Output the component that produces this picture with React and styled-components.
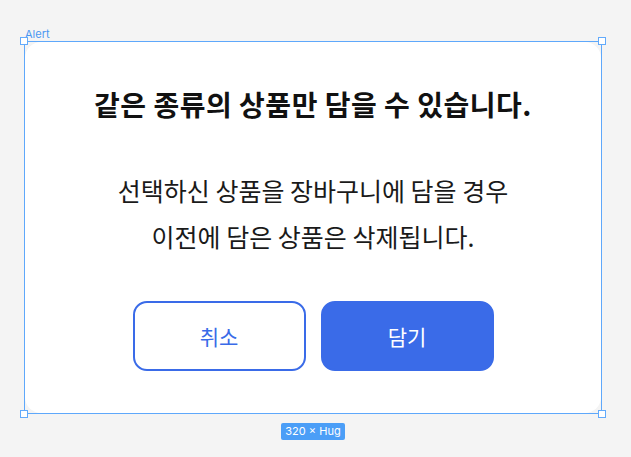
import React from "react";
import styled, { createGlobalStyle } from "styled-components";

const Global = createGlobalStyle`
  html, body { margin: 0; padding: 0; background: #f4f4f4; }
  body { font-family: Inter, "Noto Sans CJK KR", sans-serif; }
`;

const Canvas = styled.div`
  width: 631px;
  height: 457px;
  background: #f4f4f4;
  padding: 27px 0 0 24px;
  box-sizing: border-box;
`;

const Selection = styled.div`
  display: flex;
  flex-direction: column;
  width: 578px;
`;

const FrameLabel = styled.div`
  font-family: Inter, sans-serif;
  font-size: 11px;
  line-height: 14px;
  height: 14px;
  color: #4a97f2;
  margin-left: 1px;
`;

const Frame = styled.div`
  position: relative;
  width: 578px;
  box-sizing: border-box;
  border: 1px solid #5ea8fb;
`;

const Handle = styled.span`
  position: absolute;
  width: 6px;
  height: 6px;
  background: #fff;
  border: 1.5px solid #62aafb;
  ${(p) => (p.$top ? "top: -5px;" : "bottom: -5px;")}
  ${(p) => (p.$left ? "left: -5px;" : "right: -5px;")}
`;

const Card = styled.div`
  background: #ffffff;
  border-radius: 16px;
  display: flex;
  flex-direction: column;
  align-items: center;
  padding: 44px 0 42px;
`;

const Title = styled.h2`
  margin: 0;
  font-family: "Noto Sans CJK KR", sans-serif;
  font-weight: 700;
  font-size: 28px;
  line-height: 36px;
  color: #111;
  letter-spacing: 0.5px;
`;

const Body = styled.p`
  margin: 45px 0 0;
  font-family: "Noto Sans CJK KR", sans-serif;
  font-weight: 400;
  font-size: 25px;
  line-height: 46px;
  color: #1a1a1a;
  text-align: center;
`;

const Buttons = styled.div`
  display: flex;
  gap: 15px;
  margin-top: 42px;
`;

const Button = styled.button`
  width: 173px;
  height: 70px;
  box-sizing: border-box;
  border-radius: 14px;
  font-family: "Noto Sans CJK KR", sans-serif;
  font-size: 21px;
  font-weight: 400;
  display: flex;
  align-items: center;
  justify-content: center;
  cursor: pointer;
  border: 2px solid #3a6be8;
  background: ${(p) => (p.$primary ? "#3a6be8" : "#ffffff")};
  color: ${(p) => (p.$primary ? "#ffffff" : "#3a6be8")};
`;

const Footer = styled.div`
  display: flex;
  justify-content: center;
  margin-top: 9px;
`;

const SizeBadge = styled.div`
  font-family: Inter, sans-serif;
  font-size: 11px;
  line-height: 17px;
  height: 17px;
  padding: 0 4px;
  border-radius: 2px;
  background: #4b9ef7;
  color: #fff;
`;

export default function App() {
  return (
    <>
      <Global />
      <Canvas>
        <Selection>
          <FrameLabel>Alert</FrameLabel>
          <Frame>
            <Card>
              <Title>같은 종류의 상품만 담을 수 있습니다.</Title>
              <Body>
                선택하신 상품을 장바구니에 담을 경우
                <br />
                이전에 담은 상품은 삭제됩니다.
              </Body>
              <Buttons>
                <Button>취소</Button>
                <Button $primary>담기</Button>
              </Buttons>
            </Card>
            <Handle $top $left />
            <Handle $top />
            <Handle $left />
            <Handle />
          </Frame>
          <Footer>
            <SizeBadge>320 × Hug</SizeBadge>
          </Footer>
        </Selection>
      </Canvas>
    </>
  );
}
